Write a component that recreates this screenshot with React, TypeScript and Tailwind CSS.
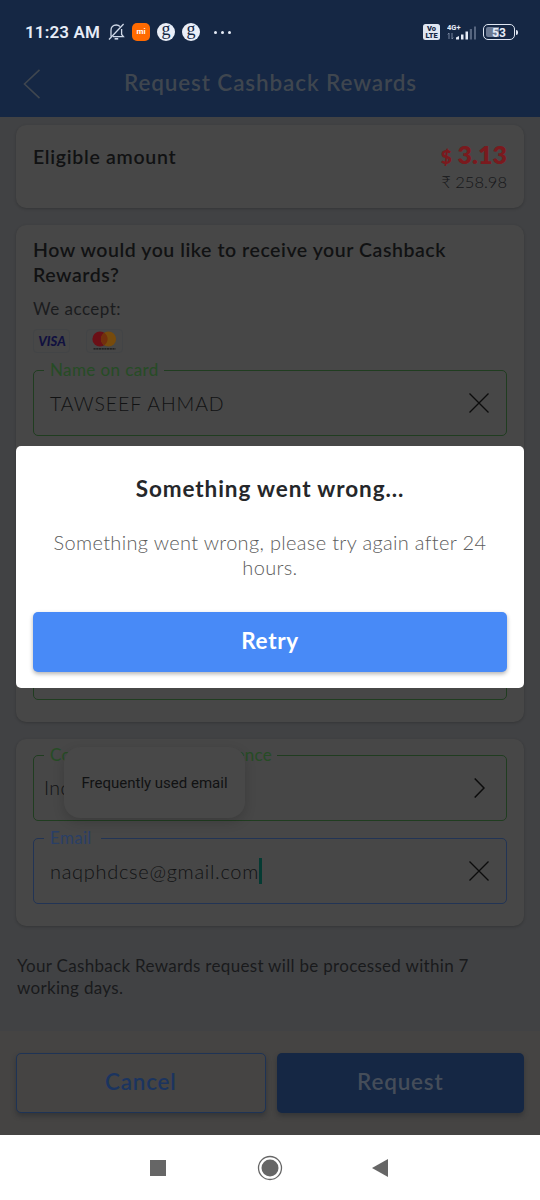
import React from 'react'
import { clsx } from 'clsx'

type Tone = 'green' | 'blue'

const borderTone: Record<Tone, string> = {
  green: 'border-[#203d20]',
  blue: 'border-[#223455]',
}

const labelTone: Record<Tone, string> = {
  green: 'text-[#264c25]',
  blue: 'text-[#2a3f66]',
}

const CloseIcon = () => (
  <svg className="size-5" viewBox="0 0 20 20" fill="none" stroke="#0c0c0c" strokeWidth="1.3">
    <path d="M0.5 0.5 19.5 19.5M19.5 0.5 0.5 19.5" />
  </svg>
)

const ChevronIcon = () => (
  <svg className="mr-1 h-5 w-[11px]" viewBox="0 0 11 20" fill="none" stroke="#0c0c0c" strokeWidth="1.5">
    <path d="M0.7 0.5 10 10 0.7 19.5" />
  </svg>
)

interface FieldProps {
  label?: string
  labelClass?: string
  tone: Tone
  icon?: React.ReactNode
  children?: React.ReactNode
}

function Field({ label, labelClass, tone, icon, children }: FieldProps) {
  return (
    <div
      className={clsx(
        'relative flex h-[66px] items-center justify-between rounded-[5px] border pl-4 pr-[17px]',
        borderTone[tone]
      )}
    >
      {label && (
        <span
          className={clsx(
            'absolute -top-[13px] left-[10px] bg-[#474747] pl-1.5 text-[17px] leading-6 whitespace-nowrap',
            labelTone[tone],
            labelClass
          )}
        >
          {label}
        </span>
      )}
      {children}
      {icon}
    </div>
  )
}

function Card({ className, children }: { className?: string; children: React.ReactNode }) {
  return (
    <section className={clsx('rounded-[10px] bg-[#474747] px-[17px] shadow-[0_1px_3px_rgba(0,0,0,0.2)]', className)}>
      {children}
    </section>
  )
}

function StatusBar() {
  return (
    <div className="flex h-16 items-center pl-[25px] pr-[22px] font-['Roboto',sans-serif] text-[#e6ecf7]">
      <span className="w-[83px] pt-px text-[17px] font-semibold tracking-[0.15px] whitespace-nowrap">11:23 AM</span>
      <svg className="h-[18px] w-[17px]" viewBox="0 0 17 18" fill="none" stroke="#cfd8e8" strokeWidth="1.3">
        <path d="M3 13.5V7.2C3 4.2 5 2 8.2 2c1.6 0 2.8.5 3.7 1.5M13.6 6v5.5l1.8 2.2H5M1 16.5 15.6 1" />
        <path d="M6.6 15.8h3.6" strokeWidth="1.6" />
      </svg>
      <span className="ml-[7px] flex size-[18px] items-center justify-center rounded-[5px] bg-[#ff6a00] text-[8px] font-bold leading-none text-white">
        mi
      </span>
      {[0, 1].map((i) => (
        <span
          key={i}
          className="ml-[7px] flex size-[18px] items-center justify-center rounded-full bg-[#e9eef8] font-['Liberation_Serif',serif] text-[18px] leading-none text-[#152744]"
        >
          <span className="-mt-[7px]">g</span>
        </span>
      ))}
      <span className="ml-[14px] flex gap-[4px]">
        <i className="size-[3px] rounded-full bg-[#e6ecf7]" />
        <i className="size-[3px] rounded-full bg-[#e6ecf7]" />
        <i className="size-[3px] rounded-full bg-[#e6ecf7]" />
      </span>
      <span className="ml-auto flex h-4 w-[17px] flex-col items-center justify-center rounded-[2.5px] bg-[#dfe6f2] text-[7.5px] font-black text-[#152744]">
        <span className="block h-[7px] leading-[7px]">Vo</span>
        <span className="block h-[8px] leading-[8px]">LTE</span>
      </span>
      <svg className="ml-[7px] h-[18px] w-[30px]" viewBox="0 0 30 18">
        <text x="0" y="6.5" fontSize="7.5" fontWeight="700" fill="#e6ecf7">
          4G+
        </text>
        <path d="M2 10v6M2 10 .8 11.4M5 10v6M5 16l1.2-1.4" stroke="#8d9ab3" strokeWidth=".8" fill="none" />
        <path d="M9 14.5 12 13v3.5H9zM14 11.5h2.5v5H14zM18.5 8.5H21v8h-2.5z" fill="#e6ecf7" />
        <path d="M22.8 6H25v10.5h-2.2zM27 3.5h2v13h-2z" fill="#56657f" />
      </svg>
      <span className="ml-[6px] flex h-4 w-[32px] items-center rounded-[5px] border-[1.5px] border-[#dfe6f2] p-[2px] text-[12px] font-bold leading-none">
        <span className="h-full w-full rounded-[2px] bg-gradient-to-r from-[#6c7a93] from-50% to-transparent to-50% text-center leading-[12px]">
          53
        </span>
      </span>
      <span className="ml-px h-[5px] w-[2px] rounded-r bg-[#dfe6f2]" />
    </div>
  )
}

export default function App() {
  return (
    <div className="relative flex h-[1200px] w-[540px] flex-col overflow-hidden bg-[#414244] font-['Lato',sans-serif] text-[#111213]">
      <header className="h-[117px] shrink-0 bg-[#152744]">
        <StatusBar />
        <div className="flex h-10 items-center pl-[23px]">
          <svg className="h-[30px] w-[18px]" viewBox="0 0 18 30" fill="none" stroke="#3f464f" strokeWidth="1.6">
            <path d="M16.5 .8 1.5 15l15 14.2" />
          </svg>
          <h1 className="-mt-[3px] ml-[83px] text-[22.5px] font-semibold tracking-[0.87px] whitespace-nowrap text-[#3f464f]">
            Request Cashback Rewards
          </h1>
        </div>
      </header>

      <main className="flex flex-1 flex-col px-4 pt-2">
        <Card className="flex h-[83px] justify-between pt-[15px]">
          <h2 className="pt-px text-[19.5px] font-semibold leading-8 tracking-[0.7px]">Eligible amount</h2>
          <div className="text-right">
            <div className="text-[25px] font-extrabold leading-7 text-[#7a1a1e]">
              <span className="text-[19px]">$</span> 3.13
            </div>
            <div className="-mt-[2px] text-[16.5px] font-light leading-[26px] text-[#151618]">₹ 258.98</div>
          </div>
        </Card>

        <Card className="mt-[17px] flex h-[497px] flex-col pt-3">
          <h2 className="text-[19.5px] font-semibold leading-[25px] tracking-[0.55px] whitespace-nowrap">
            How would you like to receive your Cashback
            <br />
            Rewards?
          </h2>
          <p className="mt-[10px] text-[17px] leading-6 tracking-[0.5px] text-[#1b1c1e]">We accept:</p>
          <div className="mt-2 flex gap-4">
            <span className="flex h-6 w-[37px] items-center justify-center rounded-sm border border-[#424446] pl-px text-[13px] font-black italic leading-none text-[#11113f]">
              VISA
            </span>
            <svg className="h-6 w-[37px] rounded-sm border border-[#424446]" viewBox="0 0 35 22">
              <circle cx="13" cy="9" r="7.6" fill="#6b1016" />
              <circle cx="21.5" cy="9" r="7.6" fill="#774b0c" />
              <path d="M17.25 2.7a7.6 7.6 0 0 1 0 12.6 7.6 7.6 0 0 1 0-12.6z" fill="#722f0c" />
              <path d="M6.5 18.8h22" stroke="#191919" strokeWidth="1.2" strokeDasharray="2.2 .5" />
            </svg>
          </div>
          <div className="mt-[17px] flex h-[330px] flex-col justify-between">
            <Field label="Name on card" labelClass="pr-[5px] tracking-[0.4px]" tone="green" icon={<CloseIcon />}>
              <span className="pt-0.5 text-[19.5px] font-light tracking-[0.9px]">TAWSEEF AHMAD</span>
            </Field>
            <Field tone="green" />
          </div>
        </Card>

        <Card className="relative mt-[17px] flex h-[187px] flex-col gap-[17px] pt-4">
          <Field
            label="Country of current residence"
            labelClass="pr-[5px] tracking-[0.3px]"
            tone="green"
            icon={<ChevronIcon />}
          >
            <span className="-ml-[6px] text-[19.5px] font-light tracking-[0.4px]">India</span>
          </Field>
          <Field label="Email" labelClass="pr-[9px] tracking-[0.3px]" tone="blue" icon={<CloseIcon />}>
            <span className="flex items-center text-[20px] font-light tracking-[0.7px]">
              naqphdcse@gmail.com
              <i className="h-[26px] w-[3px] bg-[#053b33]" />
            </span>
          </Field>
          <div className="absolute left-[48px] top-2 flex h-[71px] w-[181px] items-center justify-center rounded-2xl bg-[#484848] pt-0.5 font-['Roboto',sans-serif] text-[15px] shadow-[0_4px_12px_rgba(0,0,0,0.16)]">
            Frequently used email
          </div>
        </Card>

        <p className="mt-[29px] pl-px text-[17px] leading-[22px] tracking-[0.31px] text-[#191a1c]">
          Your Cashback Rewards request will be processed within 7
          <br />
          working days.
        </p>
      </main>

      <footer className="flex h-[104px] shrink-0 gap-[11px] bg-[#454443] px-4 pt-[21.5px] text-[22.5px] font-semibold tracking-[0.8px]">
        <button className="h-[60px] flex-1 rounded-[5px] border-[1.5px] border-[#1e3355] bg-[#454443] pb-0.5 text-[#1b345f] shadow-[0_3px_5px_rgba(20,25,35,0.35)]">
          Cancel
        </button>
        <button className="h-[60px] flex-1 rounded-[5px] bg-[#152744] pb-0.5 text-[#454d59] shadow-[0_3px_5px_rgba(20,25,35,0.35)]">
          Request
        </button>
      </footer>

      <nav className="flex h-[65px] shrink-0 items-center justify-center bg-white">
        <svg className="h-[26px] w-[240px]" viewBox="0 0 240 26" fill="#666">
          <path d="M0 5h16v16H0z" />
          <circle cx="120" cy="13" r="11.5" fill="none" stroke="#666" strokeWidth="1.3" />
          <circle cx="120" cy="13" r="8.5" />
          <path d="M222 13 238 4v18z" />
        </svg>
      </nav>

      <div
        role="dialog"
        className="absolute left-4 top-[446px] flex h-[242px] w-[508px] flex-col rounded-[5px] bg-white px-[17px] pt-[29px] text-center"
      >
        <h2 className="text-[22.5px] font-bold leading-7 tracking-[0.9px] text-[#25272a]">Something went wrong...</h2>
        <p className="mt-[27px] text-[20px] font-light leading-[25px] tracking-[0.33px] text-[#5c5c5c]">
          Something went wrong, please try again after 24
          <br />
          hours.
        </p>
        <button className="mt-8 h-[59.5px] rounded-[5px] bg-[#488af7] pb-0.5 text-[22.5px] font-bold tracking-[0.7px] text-white shadow-[0_2px_4px_rgba(0,0,0,0.3)]">
          Retry
        </button>
      </div>
    </div>
  )
}
